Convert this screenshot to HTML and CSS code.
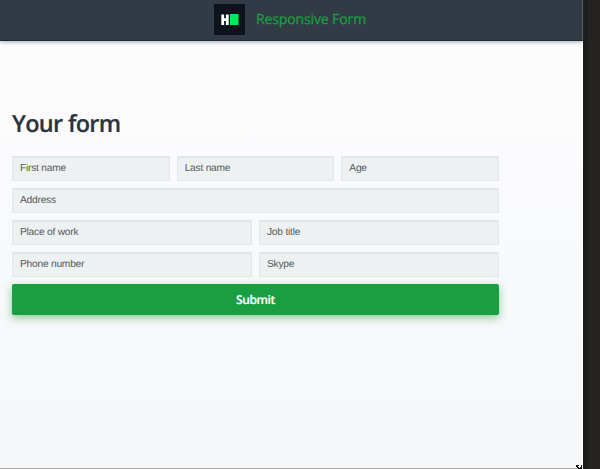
FILE: index.html
```html
<!DOCTYPE html>
<html lang="en">
<head>
<meta charset="utf-8">
<title>Responsive Form</title>
<link rel="stylesheet" href="styles.css">
</head>
<body>
<div class="page">
  <header class="header">
    <svg class="logo" width="31" height="31" viewBox="0 0 31 31" aria-hidden="true">
      <rect width="31" height="31" fill="#0d131c"/>
      <path d="M8.7 10.5v10.5M13.3 10.5v10.5M9 15.7h4" fill="none" stroke="#fff" stroke-width="2.8"/>
      <rect x="16" y="10" width="8.5" height="11" fill="#00e85b"/>
    </svg>
    <span class="brand">Responsive Form</span>
  </header>
  <main class="content">
    <h1 class="title">Your form</h1>
    <form class="form">
      <div class="row">
        <input class="field" type="text" placeholder="First name">
        <input class="field" type="text" placeholder="Last name">
        <input class="field" type="text" placeholder="Age">
      </div>
      <div class="row">
        <input class="field" type="text" placeholder="Address">
      </div>
      <div class="row">
        <input class="field" type="text" placeholder="Place of work">
        <input class="field" type="text" placeholder="Job title">
      </div>
      <div class="row">
        <input class="field" type="text" placeholder="Phone number">
        <input class="field" type="text" placeholder="Skype">
      </div>
      <button class="submit" type="button">Submit</button>
    </form>
  </main>
  <svg class="resize" width="6" height="4" viewBox="0 0 6 4" aria-hidden="true">
    <path d="M0 0h3v1H2v1h1v1h1V2h1V0h1v4H2V3H1V2H0z" fill="#111"/>
  </svg>
</div>
</body>
</html>
```

FILE: styles.css
```css
* {
  box-sizing: border-box;
}

body {
  margin: 0;
  height: 469px;
  overflow: hidden;
  background: linear-gradient(90deg, #1b1b1a 586px, #242321 589px);
  font-family: "Open Sans", sans-serif;
  text-rendering: geometricPrecision;
}

.page {
  position: relative;
  width: 583px;
  height: 469px;
  border-right: 1px solid #fff;
  border-bottom: 1px solid #aaa;
  background: linear-gradient(#fdfcfd 40px, #fbfbfd 150px, #f7f9fa 270px, #f5f7f9);
}

.header {
  display: flex;
  align-items: center;
  gap: 11px;
  width: 583px;
  height: 41px;
  padding: 0 0 2px 214px;
  border-right: 1px solid #53606b;
  border-bottom: 1px solid #202c34;
  background: #323a45;
  box-shadow: 0 1px 4px rgba(50, 75, 75, .45);
}

.logo {
  display: block;
}

.brand {
  padding-top: 2px;
  color: #1a9e42;
  font-size: 14px;
  letter-spacing: -.12px;
  line-height: 20px;
  -webkit-text-stroke: .3px #1a9e42;
}

.content {
  width: 511px;
  padding: 65px 12px 0;
}

.title {
  margin: 0;
  color: #2c333c;
  font-size: 23.5px;
  font-weight: 600;
  letter-spacing: -.7px;
  line-height: 34px;
  -webkit-text-stroke: .2px #2c333c;
}

.form {
  display: flex;
  flex-direction: column;
  gap: 7px;
  margin-top: 16px;
}

.row {
  display: flex;
  gap: 7px;
}

.field {
  flex: 1;
  width: 0;
  height: 25px;
  padding: 0 7px 1px;
  border: 1px solid #e3e7e8;
  border-radius: 0;
  background: #edf1f2;
  box-shadow: inset 0 1px 1px #e0e4e5;
  font: 10.2px "Liberation Sans", sans-serif;
  letter-spacing: -.22px;
  text-rendering: geometricPrecision;
}

.field::placeholder {
  color: #56595b;
  opacity: 1;
}

.submit {
  height: 31px;
  padding: 1px 0 0;
  border: 0;
  border-radius: 2px;
  background: #1a9e42;
  box-shadow: 0 3px 8px rgba(26, 158, 66, .5);
  color: #fff;
  font: 600 12px/30px "Open Sans", sans-serif;
  letter-spacing: -.4px;
  text-rendering: geometricPrecision;
  -webkit-text-stroke: .2px #fff;
}

.resize {
  position: absolute;
  right: 0;
  bottom: -1px;
}
```
